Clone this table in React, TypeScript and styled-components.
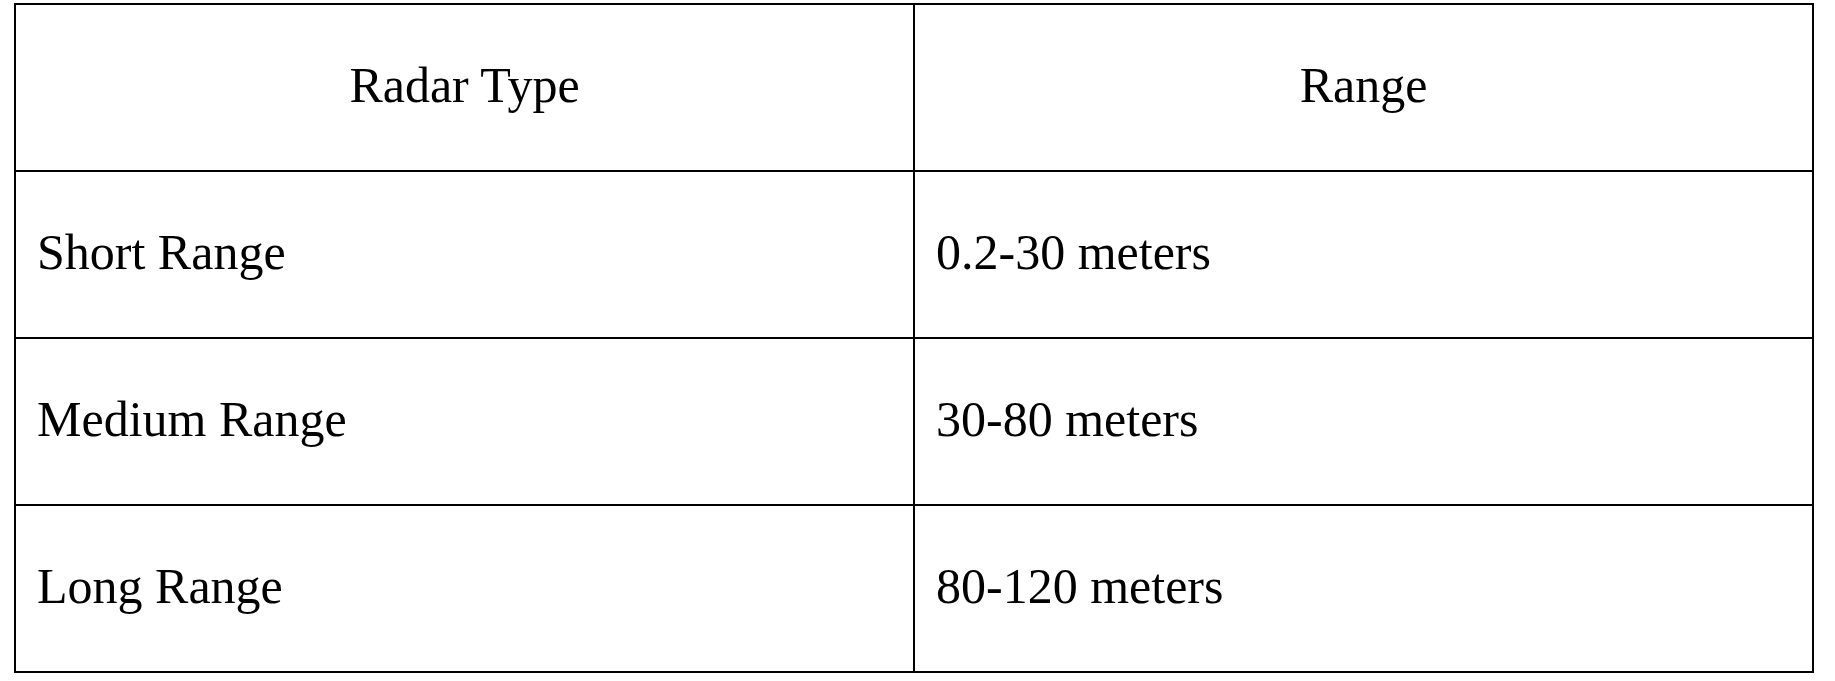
import React from "react";
import styled, { createGlobalStyle } from "styled-components";

const Global = createGlobalStyle`
  html, body { margin: 0; padding: 0; background: #ffffff; }
  body { font-family: "Liberation Serif", "Times New Roman", serif; color: #000; }
`;

const Page = styled.div`
  padding: 3px 0 0 14px;
`;

const Table = styled.div`
  display: grid;
  grid-template-columns: 899px 899px;
  grid-auto-rows: 167px;
  width: 1798px;
  border-top: 2px solid #000;
  border-left: 2px solid #000;
`;

const Cell = styled.div<{ $head?: boolean }>`
  display: flex;
  align-items: center;
  justify-content: ${(p) => (p.$head ? "center" : "flex-start")};
  padding: ${(p) => (p.$head ? "0" : "0 0 3px 21px")};
  padding-bottom: 3px;
  border-right: 2px solid #000;
  border-bottom: 2px solid #000;
  font-size: 50px;
  line-height: 1.15;
  color: #000;
  white-space: nowrap;
`;

const rows: [string, string][] = [
  ["Short Range", "0.2-30 meters"],
  ["Medium Range", "30-80 meters"],
  ["Long Range", "80-120 meters"],
];

export default function App() {
  return (
    <>
      <Global />
      <Page>
        <Table>
          <Cell $head>Radar Type</Cell>
          <Cell $head>Range</Cell>
          {rows.map(([a, b]) => (
            <React.Fragment key={a}>
              <Cell>{a}</Cell>
              <Cell>{b}</Cell>
            </React.Fragment>
          ))}
        </Table>
      </Page>
    </>
  );
}
